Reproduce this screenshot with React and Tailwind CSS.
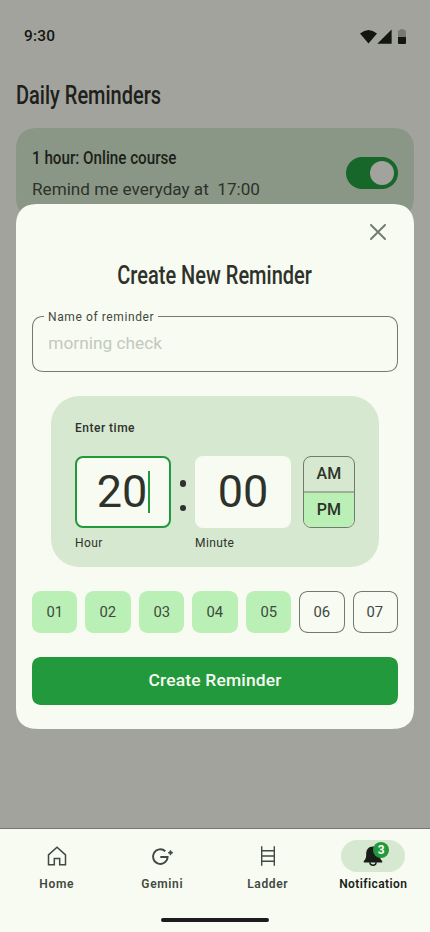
import React from "react";

const days = ["01", "02", "03", "04", "05", "06", "07"];

function StatusBar() {
  return (
    <div className="flex h-14 items-end justify-between pr-6 pl-6 pb-2">
      <span className="origin-left scale-x-[1.1] text-[14px] leading-6 font-medium tracking-[0.2px] text-[#121610]">9:30</span>
      <svg width="47" height="16" viewBox="0 0 47 16" className="mb-[3px]">
        <path d="M1 4.4Q9.5-2.6 18 4.4L9.5 14.4Z" fill="#121610" />
        <path d="M18.3 14.8L32.6.6V14.8Z" fill="#121610" />
        <path d="M39 2.2a1 1 0 0 1 1-1h1V.2h4v1h1a1 1 0 0 1 1 1V8H39Z" fill="#777972" />
        <path d="M39 8h8v6a1 1 0 0 1-1 1h-6a1 1 0 0 1-1-1Z" fill="#121610" />
      </svg>
    </div>
  );
}

function ReminderCard() {
  return (
    <div className="mx-4 mt-4 flex h-[90px] justify-between rounded-[22px] bg-[#8b9786] px-4 pt-4 [corner-shape:superellipse(1.3)]">
      <div>
        <h2 className="w-[144px] origin-left scale-x-[0.8] text-[19px] leading-7 font-medium whitespace-nowrap text-[#1b1f19]">1 hour: Online course</h2>
        <p className="mt-[6px] origin-left scale-x-[1.07] text-[16px] leading-6 whitespace-pre text-[#2c322a]">Remind me everyday at  17:00</p>
      </div>
      <div className="mt-[13px] flex h-8 w-[52px] items-center justify-end rounded-full bg-[#17662a] pr-1">
        <div className="size-6 rounded-full bg-[#a2a39c]" />
      </div>
    </div>
  );
}

function TimePanel() {
  return (
    <div className="mx-auto mt-6 h-[171px] w-[328px] rounded-[28px] bg-[#d6e8d0] px-6 pt-6 text-[#2d322b]">
      <p className="text-[12px] leading-4 font-medium tracking-[0.5px]">Enter time</p>
      <div className="mt-5 flex">
        <div>
          <div className="flex h-[72px] w-24 items-center justify-center rounded-lg border-2 border-[#22993d] bg-[#f8fbf1] text-[45px] leading-[52px]">
            <span>20</span>
            <span className="-mr-px ml-px h-[42px] w-0.5 bg-[#22993d]" />
          </div>
          <p className="mt-[7px] text-[12px] leading-4 tracking-[0.4px]">Hour</p>
        </div>
        <div className="flex h-[72px] w-6 flex-col items-center justify-center gap-[18px] pt-[7px]">
          <span className="size-[6.5px] rounded-full bg-[#2d322b]" />
          <span className="size-[6.5px] rounded-full bg-[#2d322b]" />
        </div>
        <div>
          <div className="flex h-[72px] w-24 items-center justify-center rounded-lg bg-[#f8fbf1] text-[45px] leading-[52px]">00</div>
          <p className="mt-[7px] text-[12px] leading-4 tracking-[0.4px]">Minute</p>
        </div>
        <div className="ml-3 flex h-[72px] w-[52px] flex-col overflow-hidden rounded-lg border border-[#72796f] text-center text-[16px] font-medium tracking-[0.15px]">
          <div className="h-[34px] leading-[34px]">AM</div>
          <div className="h-[36px] border-t-2 border-[#9caf98] bg-[#baf0b6] leading-[33px]">PM</div>
        </div>
      </div>
    </div>
  );
}

function Dialog() {
  return (
    <div className="absolute top-[204px] right-4 left-4 h-[525px] rounded-[22px] bg-[#f8fbf1] px-4 [corner-shape:superellipse(1.3)]">
      <div className="flex h-14 items-center justify-end pr-3">
        <svg width="16" height="16" viewBox="0 0 16 16" stroke="#72796f" strokeWidth="1.9" strokeLinecap="round">
          <path d="M1 1L15 15M15 1L1 15" />
        </svg>
      </div>
      <div className="flex justify-center">
        <h1 className="scale-x-[0.8] text-[25px] leading-8 font-medium whitespace-nowrap text-[#2d322b]">Create New Reminder</h1>
      </div>
      <fieldset className="mt-4 h-16 rounded-xl border border-[#72796f] px-[11px] [corner-shape:superellipse(1.3)]">
        <legend className="px-1 pt-0.5 text-[12px] leading-[14px] tracking-[0.6px] text-[#424940]">Name of reminder</legend>
        <p className="origin-left scale-x-[1.08] pt-2 pl-1 text-[16px] leading-6 text-[#c2c9bd]">morning check</p>
      </fieldset>
      <TimePanel />
      <div className="mt-6 grid grid-cols-7 gap-2">
        {days.map((day, i) => (
          <button
            key={day}
            className={
              "h-[42px] rounded-[10px] border text-[14px] text-[#424940] [corner-shape:superellipse(1.3)] " +
              (i < 5 ? "border-[#baf0b6] bg-[#baf0b6]" : "border-[#72796f]")
            }
          >
            <span className="inline-block scale-x-[1.06]">{day}</span>
          </button>
        ))}
      </div>
      <button className="mt-6 h-12 w-full rounded-[10px] bg-[#22993d] text-[16px] font-medium text-[#f8fbf1] [corner-shape:superellipse(1.3)]">
        <span className="inline-block scale-x-[1.09] tracking-[0.15px]">Create Reminder</span>
      </button>
    </div>
  );
}

function HomeIcon() {
  return (
    <svg width="24" height="24" viewBox="0 0 24 24" fill="none" stroke="#424940" strokeWidth="1.5">
      <path d="M3.5 20.8V10.9L12 3.2l8.5 7.7v9.9h-5.8v-6.3H9.3v6.3Z" />
    </svg>
  );
}

function GeminiIcon() {
  return (
    <svg width="24" height="24" viewBox="0 0 24 24" fill="none">
      <path d="M15.3 7.3A7.3 7.3 0 1 0 17.6 13H10.3" stroke="#424940" strokeWidth="1.9" />
      <path d="M20.5 6.2Q20.9 8.3 23 8.7Q20.9 9.1 20.5 11.2Q20.1 9.1 18 8.7Q20.1 8.3 20.5 6.2Z" fill="#424940" stroke="#424940" strokeWidth=".8" />
    </svg>
  );
}

function LadderIcon() {
  return (
    <svg width="24" height="24" viewBox="0 0 24 24" stroke="#424940" strokeWidth="1.4">
      <path d="M5.7 2.3V21.7M18.3 2.3V21.7M5.7 6.8H18.3M5.7 12H18.3M5.7 17.3H18.3" />
    </svg>
  );
}

function BellIcon() {
  return (
    <svg width="24" height="24" viewBox="0 0 24 24" fill="#191d17">
      <path d="M12 2.4c-4.7 0-6.8 3.2-6.8 7.5 0 4-.6 5.2-2.4 7v1.5h18.4v-1.5c-1.8-1.8-2.4-3-2.4-7 0-4.3-2.1-7.5-6.8-7.5Z" />
      <path d="M8.9 18.2a3.1 3.1 0 0 0 6.2 0" fill="none" stroke="#191d17" strokeWidth="1.4" />
    </svg>
  );
}

function NavItem({ icon, label, active }) {
  return (
    <div className="flex flex-1 flex-col items-center gap-1">
      <div className={"relative flex h-8 w-16 items-center justify-center rounded-full " + (active ? "bg-[#d6e8d0]" : "")}>
        {icon}
        {active && (
          <span className="absolute top-0.5 left-8 size-4 rounded-full bg-[#22993d] text-center text-[12px] leading-4 font-bold text-[#f8fbf1]">3</span>
        )}
      </div>
      <span className={"text-[12px] leading-4 font-semibold " + (active ? "tracking-[0.42px] text-[#191d17]" : "tracking-[0.65px] text-[#424940]")}>{label}</span>
    </div>
  );
}

export default function App() {
  return (
    <div className="relative flex h-[932px] w-[430px] flex-col overflow-hidden bg-[#a2a39c] font-['Roboto',sans-serif]">
      <StatusBar />
      <h1 className="mt-6 ml-4 w-[144px] origin-left scale-x-[0.8] text-[25px] leading-8 font-medium whitespace-nowrap text-[#1d211b]">Daily Reminders</h1>
      <ReminderCard />
      <Dialog />
      <nav className="mt-auto flex h-[104px] flex-col items-center justify-between border-t border-[#72796f] bg-[#f8fbf1] px-1 pt-[11px] pb-[10px]">
        <div className="flex w-full">
          <NavItem icon={<HomeIcon />} label="Home" />
          <NavItem icon={<GeminiIcon />} label="Gemini" />
          <NavItem icon={<LadderIcon />} label="Ladder" />
          <NavItem icon={<BellIcon />} label="Notification" active />
        </div>
        <div className="h-1 w-[108px] rounded-full bg-[#1d1b20]" />
      </nav>
    </div>
  );
}
